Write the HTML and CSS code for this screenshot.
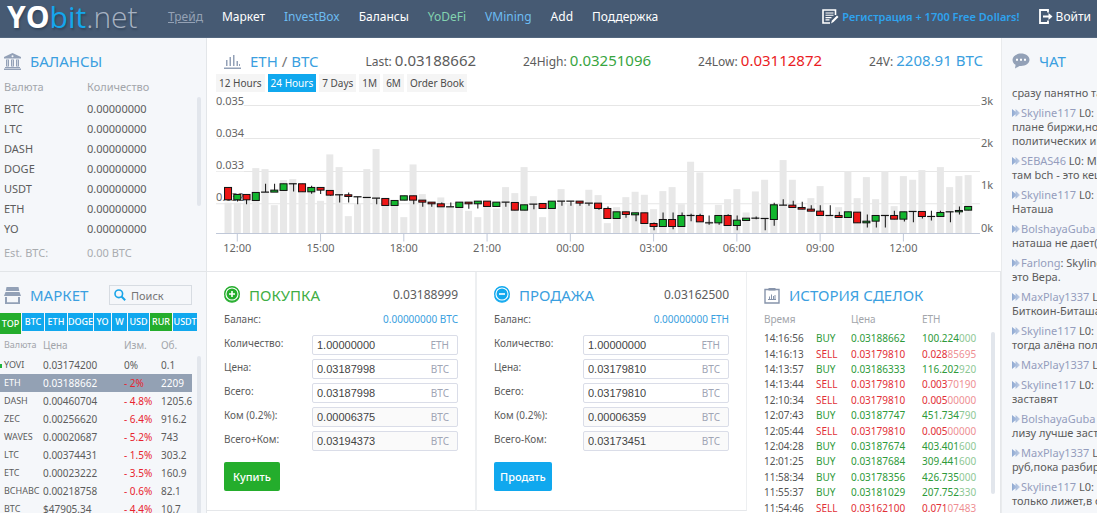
FILE: index.html
```
<!DOCTYPE html>
<html lang="ru">
<head>
<meta charset="utf-8">
<title>YObit.net</title>
<link rel="stylesheet" href="styles.css">
</head>
<body>
<header class="top">
  <a class="logo" href="#"><b>YO</b><span class="logo-bit">bit</span><span class="logo-net">.net</span></a>
  <nav class="nav">
    <a class="current" href="#">Трейд</a>
    <a href="#">Маркет</a>
    <a class="sky" href="#">InvestBox</a>
    <a href="#">Балансы</a>
    <a class="mint" href="#">YoDeFi</a>
    <a class="sky" href="#">VMining</a>
    <a href="#">Add</a>
    <a href="#">Поддержка</a>
  </nav>
  <div class="account">
    <a class="register" href="#"><svg width="17" height="16" viewBox="0 0 17 16" fill="none" stroke="#fff"><path d="M13.5 6V1H1v13h7" stroke-width="1.6"/><path d="M3.5 4h8M3.5 6.3h8M3.5 8.6h6M3.5 10.9h4" stroke-width="1.1"/><path d="M9 14.5l1-3 5-5 1.5 1.5-5 5z" fill="#fff" stroke="none"/></svg><span>Регистрация + 1700 Free Dollars!</span></a>
    <a class="login" href="#"><svg width="14" height="15" viewBox="0 0 14 15" fill="none" stroke="#fff" stroke-width="1.8"><path d="M9 3.500V1H1v13h8v-2.500M4 7.500h7"/><path d="M9.500 4l4 3.500-4 3.500z" fill="#fff" stroke="none"/></svg><span>Войти</span></a>
  </div>
</header>
<div class="page">
  <aside class="side">
    <section class="balances">
      <h2 class="title"><svg width="17" height="17" viewBox="0 0 17 17" fill="#93a1b7"><path d="M8.500 0L17 4v1.500H0V4zM2 6.500h3v7H2zM7 6.500h3v7H7zM12 6.500h3v7h-3zM1 14h15v1H1zM0 15.500h17V17H0z"/><circle cx="8.500" cy="3.200" r="1" fill="#f5f7fa"/><path d="M3.500 7v6M8.500 7v6M13.500 7v6" stroke="#f5f7fa" stroke-width=".6"/></svg>БАЛАНСЫ</h2>
      <div class="scroller">
      <table class="balance-table">
        <thead><tr><th>Валюта</th><th>Количество</th></tr></thead>
        <tbody>
          <tr><td>BTC</td><td>0.00000000</td></tr>
          <tr><td>LTC</td><td>0.00000000</td></tr>
          <tr><td>DASH</td><td>0.00000000</td></tr>
          <tr><td>DOGE</td><td>0.00000000</td></tr>
          <tr><td>USDT</td><td>0.00000000</td></tr>
          <tr><td>ETH</td><td>0.00000000</td></tr>
          <tr><td>YO</td><td>0.00000000</td></tr>
        </tbody>
        <tfoot><tr><td>Est. BTC:</td><td>0.00 BTC</td></tr></tfoot>
      </table>
      <div class="thumb thumb-balance"></div>
      </div>
    </section>
    <section class="market">
      <div class="market-head">
        <h2 class="title"><svg width="17" height="17" viewBox="0 0 17 17" fill="#93a1b7"><path d="M2.500 0h12l.8 4H1.700zM1.500 5h14L17 9H0zM1 10h2v5.200h11V10h2v7H1z"/></svg>МАРКЕТ</h2>
        <label class="search"><svg width="12" height="12" viewBox="0 0 12 12" fill="none" stroke="#1aa5e8"><circle cx="4.800" cy="4.800" r="3.800" stroke-width="1.600"/><path d="M7.500 7.500l3.700 3.700" stroke-width="2"/></svg><input type="text" placeholder="Поиск" aria-label="Поиск"></label>
      </div>
      <div class="tabs">
        <button class="green tall">TOP</button><button>BTC</button><button>ETH</button><button>DOGE</button><button>YO</button><button>W</button><button>USD</button><button class="green">RUR</button><button>USDT</button>
      </div>
      <div class="scroller">
      <table class="market-table">
        <thead><tr><th>Валюта</th><th>Цена</th><th>Изм.</th><th>Об.</th></tr></thead>
        <tbody>
          <tr class="fresh"><td>YOVI</td><td>0.03174200</td><td class="flat">0%</td><td>0.1</td></tr>
          <tr class="selected"><td>ETH</td><td>0.03188662</td><td>- 2%</td><td>2209</td></tr>
          <tr><td>DASH</td><td>0.00460704</td><td>- 4.8%</td><td>1205.6</td></tr>
          <tr><td>ZEC</td><td>0.00256620</td><td>- 6.4%</td><td>916.2</td></tr>
          <tr><td>WAVES</td><td>0.00020687</td><td>- 5.2%</td><td>743</td></tr>
          <tr><td>LTC</td><td>0.00374431</td><td>- 1.5%</td><td>303.2</td></tr>
          <tr><td>ETC</td><td>0.00023222</td><td>- 3.5%</td><td>160.9</td></tr>
          <tr><td>BCHABC</td><td>0.00218758</td><td>- 0.6%</td><td>82.1</td></tr>
          <tr><td>BTC</td><td>$47905.34</td><td>- 4.4%</td><td>10.7</td></tr>
        </tbody>
      </table>
      <div class="thumb thumb-market"></div>
      </div>
    </section>
  </aside>
  <main class="main">
    <section class="chart">
      <div class="stats">
        <h1 class="title"><svg width="17" height="15" viewBox="0 0 17 15" fill="#93a1b7"><path d="M2 6h1.500v6H2zM5.500 3H7v9H5.500zM9 1h1.500v11H9zM12.500 7H14v5h-1.500zM15 10h1v2h-1zM0 13.500h17V15H0z"/></svg><span>ETH <i>/</i> BTC</span></h1>
        <span>Last: <b>0.03188662</b></span>
        <span>24High: <b class="up">0.03251096</b></span>
        <span>24Low: <b class="down">0.03112872</b></span>
        <span>24V: <b class="vol">2208.91 BTC</b></span>
      </div>
      <div class="ranges">
        <button>12 Hours</button><button class="on">24 Hours</button><button>7 Days</button><button>1M</button><button>6M</button><button>Order Book</button>
      </div>
      <svg class="plot" id="plot" viewBox="0 0 784 166" role="img" aria-label="ETH / BTC"></svg>
    </section>
    <section class="deals">
      <form class="trade buy">
        <div class="trade-head"><h2 class="title"><svg width="16" height="18" viewBox="0 0 16 18" fill="none"><path d="M.8 10.500a7.300 6.600 0 0 0 14.400 0" stroke="#24ad2c" stroke-width="1.300"/><circle cx="8" cy="8" r="7.300" stroke="#24ad2c" stroke-width="1.400" fill="#fff"/><circle cx="8" cy="8" r="5.500" fill="#24ad2c"/><path d="M8 5v6M5 8h6" stroke="#fff" stroke-width="1.600"/></svg>ПОКУПКА</h2><span>0.03188999</span></div>
        <div class="funds"><span>Баланс:</span><a href="#">0.00000000 BTC</a></div>
        <div class="field"><label for="b1">Количество:</label><span class="box"><input id="b1" value="1.00000000"><em>ETH</em></span></div>
        <div class="field"><label for="b2">Цена:</label><span class="box"><input id="b2" value="0.03187998"><em>BTC</em></span></div>
        <div class="field"><label for="b3">Всего:</label><span class="box"><input id="b3" value="0.03187998"><em>BTC</em></span></div>
        <div class="field"><label for="b4">Ком (0.2%):</label><span class="box locked"><input id="b4" value="0.00006375" readonly><em>BTC</em></span></div>
        <div class="field"><label for="b5">Всего+Ком:</label><span class="box locked"><input id="b5" value="0.03194373" readonly><em>BTC</em></span></div>
        <button class="submit" type="button">Купить</button>
      </form>
      <form class="trade sell">
        <div class="trade-head"><h2 class="title"><svg width="16" height="18" viewBox="0 0 16 18" fill="none"><path d="M.8 10.500a7.300 6.600 0 0 0 14.400 0" stroke="#10a8ee" stroke-width="1.300"/><circle cx="8" cy="8" r="7.300" stroke="#10a8ee" stroke-width="1.400" fill="#fff"/><circle cx="8" cy="8" r="5.500" fill="#10a8ee"/><path d="M5 8h6" stroke="#fff" stroke-width="1.600"/></svg>ПРОДАЖА</h2><span>0.03162500</span></div>
        <div class="funds"><span>Баланс:</span><a href="#">0.00000000 ETH</a></div>
        <div class="field"><label for="s1">Количество:</label><span class="box"><input id="s1" value="1.00000000"><em>ETH</em></span></div>
        <div class="field"><label for="s2">Цена:</label><span class="box"><input id="s2" value="0.03179810"><em>BTC</em></span></div>
        <div class="field"><label for="s3">Всего:</label><span class="box"><input id="s3" value="0.03179810"><em>BTC</em></span></div>
        <div class="field"><label for="s4">Ком (0.2%):</label><span class="box locked"><input id="s4" value="0.00006359" readonly><em>BTC</em></span></div>
        <div class="field"><label for="s5">Всего-Ком:</label><span class="box locked"><input id="s5" value="0.03173451" readonly><em>BTC</em></span></div>
        <button class="submit" type="button">Продать</button>
      </form>
      <section class="history">
        <h2 class="title"><svg width="16" height="17" viewBox="0 0 16 17" fill="none" stroke="#8794ab"><path d="M1 2.500h14v13.500H1z" stroke-width="1.400"/><path d="M4.500 1h7v2.500h-7z" fill="#8794ab" stroke="none"/><path d="M4 12.500h8M5.500 12V9.500M7.500 12V7.500M9.500 12V9M11 12V8"/></svg>ИСТОРИЯ СДЕЛОК</h2>
        <div class="scroller">
        <table class="history-table">
          <thead><tr><th>Время</th><th></th><th>Цена</th><th>ETH</th></tr></thead>
          <tbody>
            <tr class="b"><td>14:16:56</td><td>BUY</td><td>0.03188662</td><td>100.224<s>000</s></td></tr>
            <tr><td>14:16:13</td><td>SELL</td><td>0.03179810</td><td>0.028<s>85695</s></td></tr>
            <tr class="b"><td>14:13:57</td><td>BUY</td><td>0.03186333</td><td>116.202<s>920</s></td></tr>
            <tr><td>14:13:44</td><td>SELL</td><td>0.03179810</td><td>0.003<s>70190</s></td></tr>
            <tr><td>12:10:34</td><td>SELL</td><td>0.03179810</td><td>0.005<s>00000</s></td></tr>
            <tr class="b"><td>12:07:43</td><td>BUY</td><td>0.03187747</td><td>451.734<s>790</s></td></tr>
            <tr><td>12:05:44</td><td>SELL</td><td>0.03179810</td><td>0.005<s>00000</s></td></tr>
            <tr class="b"><td>12:04:28</td><td>BUY</td><td>0.03187674</td><td>403.401<s>600</s></td></tr>
            <tr class="b"><td>12:01:25</td><td>BUY</td><td>0.03187684</td><td>309.441<s>600</s></td></tr>
            <tr class="b"><td>11:58:34</td><td>BUY</td><td>0.03178356</td><td>426.735<s>000</s></td></tr>
            <tr class="b"><td>11:55:37</td><td>BUY</td><td>0.03181029</td><td>207.752<s>330</s></td></tr>
            <tr><td>11:54:46</td><td>SELL</td><td>0.03162100</td><td>0.071<s>07483</s></td></tr>
          </tbody>
        </table>
        <div class="thumb thumb-history"></div>
        </div>
      </section>
    </section>
  </main>
  <aside class="chat">
    <h2 class="title"><svg width="18" height="16" viewBox="0 0 18 16" fill="#93a1b7"><path d="M9 .5c4.700 0 8.500 2.700 8.500 6.200s-3.800 6.200-8.500 6.200h-1.500L3 15.500l.6-3.700C1.700 10.700.5 8.800.5 6.700.5 3.200 4.300.5 9 .5z"/><path d="M4 5.800h2v2H4zM8 5.800h2v2H8zM12 5.800h2v2h-2z" fill="#fff"/></svg>ЧАТ</h2>
    <div class="messages">
      <p>сразу панятно та</p>
      <p><a href="#">Skyline117</a> L0:<br>плане биржи,но<br>политических ин</p>
      <p><a href="#">SEBAS46</a> L0: М<br>там bch - это кеш</p>
      <p><a href="#">Skyline117</a> L0:<br>Наташа</p>
      <p><a href="#">BolshayaGuba</a> <u>L0</u><br>наташа не дает(</p>
      <p><a href="#">Farlong</a>: Skyline<br>это Вера.</p>
      <p><a href="#">MaxPlay1337</a> L0<br>Биткоин-Биташа</p>
      <p><a href="#">Skyline117</a> L0:<br>тогда алёна полк</p>
      <p><a href="#">MaxPlay1337</a> L0</p>
      <p><a href="#">Skyline117</a> L0:<br>заставят</p>
      <p><a href="#">BolshayaGuba</a> <u>L0</u><br>лизу лучше заста</p>
      <p><a href="#">MaxPlay1337</a> L0<br>руб,пока разбира</p>
      <p><a href="#">Skyline117</a> L0:<br>только лижет,в ос</p>
    </div>
  </aside>
</div>
<script src="chart.js"></script>
</body>
</html>
```
FILE: styles.css
```
* { box-sizing: border-box; }
body {
  margin: 0;
  height: 100vh;
  overflow: hidden;
  background: #fff;
  color: #5c5c5c;
  font: 11px/14px "Noto Sans", "Open Sans", sans-serif;
}
a { color: inherit; text-decoration: none; }
h1, h2, p { margin: 0; font-weight: 400; }
button, input { font-family: inherit; }
button { border: 0; padding: 0; cursor: pointer; }
table { border-collapse: collapse; table-layout: fixed; }
th, td { padding: 0; text-align: left; font-weight: 400; white-space: nowrap; }
th { color: #a3a6ab; }
svg { flex: none; }

.top {
  display: flex;
  align-items: center;
  height: 38px;
  padding: 0 6px 4px 7px;
  background: #465a73;
  border-bottom: 1px solid #53677f;
  color: #fff;
  font-size: 12px;
  white-space: nowrap;
}
.logo {
  width: 161px;
  font: 300 30px/34px "Open Sans", "Noto Sans", sans-serif;
  text-shadow: 1px 2px 2px #34465c;
}
.logo b { font-weight: 700; }
.logo-bit { color: #14a6ec; font-weight: 400; }
.logo-net { color: #a7b2c2; }
.nav { display: flex; gap: 19px; }
.current { color: #95a2b5; text-decoration: underline; }
.sky { color: #6cbcf2; }
.mint { color: #83d3b0; }
.account { display: flex; gap: 19px; margin-left: auto; }
.register, .login { display: flex; align-items: center; gap: 3px; }
.register { color: #2ea3ee; font-size: 11px; font-weight: 600; }

.page { display: grid; grid-template-columns: 207px minmax(0, 1fr) 96px; }
.side { background: #f5f7fa; border-right: 1px solid #e3e6e9; }
.title {
  display: flex;
  align-items: center;
  gap: 9px;
  color: #3b9fe0;
  font-size: 15px;
  line-height: 20px;
}
.scroller { position: relative; }
.thumb { position: absolute; width: 4px; background: #e2e6ec; border-radius: 2px; }

.balances { height: 234px; padding: 13px 0 0 4px; border-bottom: 1px solid #e2e5e8; }
.balance-table { width: 196px; margin-top: 6px; }
.balance-table th { height: 22px; width: 83px; padding-bottom: 3px; }
.balance-table th + th { width: auto; }
.balance-table td { height: 20px; }
.balance-table tfoot td { height: 28px; color: #a9acb0; }
.thumb-balance { left: 193px; top: 20px; height: 109px; }

.market-head { display: flex; align-items: center; justify-content: space-between; padding: 13px 14px 0 4px; }
.search {
  display: flex;
  align-items: center;
  gap: 5px;
  width: 83px;
  height: 20px;
  padding-left: 4px;
  border: 1px solid #d7dce2;
}
.search input { width: 56px; padding: 0; border: 0; outline: 0; background: none; font-size: 11px; }
.tabs {
  display: grid;
  grid-template-columns: 21px 22px 22px 25px 17px 15px 21px 22px 24px;
  gap: 1px;
  height: 21px;
  margin-top: 8px;
  align-items: start;
}
.tabs button {
  display: flex;
  justify-content: center;
  height: 18px;
  background: #10a8ee;
  color: #fff;
  font-size: 9px;
  font-weight: 500;
  line-height: 18px;
}
.tabs .green { background: #24ad2c; }
.tabs .tall { height: 21px; line-height: 21px; }
.market-table { width: 192px; font-size: 10px; }
.market-table th { height: 22px; }
.market-table th:nth-child(1) { width: 43px; }
.market-table th:nth-child(3) { width: 37px; }
.market-table th:nth-child(4) { width: 31px; }
.market-table td { height: 18px; }
.market-table th:first-child, .market-table td:first-child { padding-left: 4px; font-size: 9px; }
.market-table td:nth-child(3) { color: #e8232f; }
.market-table td.flat { color: #5c5c5c; }
.fresh { background: linear-gradient(#1fb43b, #1fb43b) 0 8px / 2px 4px no-repeat; }
.selected { background: #93a1b4; color: #fff; font-weight: 600; }
.selected td:nth-child(3) { font-weight: 400; }
.thumb-market { left: 197px; top: 22px; height: 158px; }

.chart { height: 234px; padding: 13px 0 0 9px; border-bottom: 1px solid #e5e7ea; }
.stats {
  display: flex;
  justify-content: space-between;
  align-items: center;
  height: 20px;
  padding: 0 18px 0 8px;
  font-size: 12px;
  white-space: nowrap;
}
.stats i { color: #777; font-style: normal; }
.stats b { font-size: 15px; font-weight: 400; }
.up { color: #38a53f; }
.down { color: #ea1c24; }
.vol { color: #3b9fe0; }
.ranges { display: flex; gap: 3px; margin-top: 3px; }
.ranges button { height: 18px; padding: 0 3px; background: #f5f5f5; color: #4c4c4c; font-size: 10px; }
.ranges .on { background: #10a8ee; color: #fff; }
.plot { display: block; width: 100%; height: auto; font-size: 11px; }
.plot text { fill: #666; }

.deals { display: grid; grid-template-columns: 270px 270px minmax(0, 1fr); }
.trade { height: 239px; padding: 13px 17px 0 17px; border-right: 2px solid #edeff1; border-bottom: 1px solid #e5e7ea; font-size: 10px; }
.sell { border-right-width: 1px; }
.trade-head, .funds { display: flex; justify-content: space-between; align-items: center; }
.trade-head { font-size: 12px; }
.buy .title { color: #3fae45; }
.funds { height: 14px; margin: 7px 0 9px; }
.funds a { color: #3b9fe0; }
.field { display: flex; justify-content: space-between; height: 20px; margin-bottom: 4px; line-height: 16px; }
.box { display: flex; align-items: center; width: 146px; height: 20px; padding: 0 5px 0 4px; border: 1px solid #dadde8; border-radius: 2px; }
.box input { flex: 1; min-width: 0; padding: 0; border: 0; outline: 0; background: none; color: #444; font: 11px "Liberation Sans", sans-serif; }
.box em { padding-right: 3px; color: #a0a5b5; font-style: normal; }
.locked { background: #fafafa; }
.submit { height: 29px; margin-top: 7px; padding: 0 9px; border-radius: 2px; background: #24ad2c; color: #fff; font-size: 11px; font-weight: 500; }
.sell .submit { padding: 0 6px; background: #10a8ee; }

.history { padding: 13px 0 0 17px; border-right: 1px solid #e5e7ea; }
.history-table { width: 220px; height: 208px; margin-top: 3px; font-size: 10px; line-height: 13px; }
.history-table th { height: 23px; }
.history-table th:nth-child(1) { width: 52px; }
.history-table th:nth-child(2) { width: 35px; }
.history-table th:nth-child(3) { width: 71px; }
.history-table td { color: #e23038; }
.history-table .b td { color: #2e9a3a; }
.history-table td:first-child, .history-table .b td:first-child { color: #555; }
.history-table s { opacity: .55; text-decoration: none; }
.thumb-history { left: 227px; top: 24px; height: 162px; }

.chat { padding: 13px 0 0 10px; background: #f5f7fa; border-left: 1px solid #e9ebed; overflow: hidden; }
.messages { margin-top: 15px; white-space: nowrap; }
.messages p { margin-bottom: 6px; }
.messages a { color: #949dbd; }
.messages a::before {
  content: "";
  display: inline-block;
  width: 8px;
  height: 8px;
  margin-right: 1px;
  background: linear-gradient(90deg, #8fa9d2, #c3d0e6);
  clip-path: polygon(0 0, 45% 35%, 45% 0, 100% 50%, 45% 100%, 45% 65%, 0 100%);
}
.messages u { color: #f0a24a; text-decoration: none; }
```
FILE: chart.js
```
// One entry per 20 minutes, depths in thirds of a unit below the top of the plot:
// volume top, high, body top, body bottom, low, direction (u / d / - for doji)
const candles = `330 295 295 332 332 d|310 316 316 332 337 u|322 316 316 332 345 d|237 310 310 334 334 u|240 284 309 309 309 -|348 284 303 309 309 u|273 284 284 304 304 u|270 284 284 284 307 -|310 284 284 308 308 d|308 290 295 308 314 u|335 295 295 303 315 d|196 304 304 318 320 d|234 317 317 317 340 -|381 310 317 322 340 d|345 323 323 323 345 -|240 325 325 325 325 -|180 327 327 327 345 -|340 328 328 349 349 d|345 334 334 349 349 u|384 320 320 333 333 u|226 320 320 333 345 d|315 333 333 339 353 d|340 339 339 344 353 d|325 340 344 353 353 d|352 340 353 353 353 -|350 339 339 355 355 u|365 339 339 344 359 d|384 336 336 344 358 u|353 336 336 352 352 d|358 339 339 352 352 u|294 339 339 339 353 -|312 340 340 363 363 d|234 347 347 363 363 u|321 345 345 345 360 -|384 343 343 358 358 d|350 336 336 358 358 u|300 336 336 336 350 -|345 336 336 336 350 -|345 336 336 342 350 d|302 342 342 342 350 -|318 342 342 358 362 d|402 352 358 388 388 d|354 368 368 388 388 u|324 368 368 376 386 d|308 371 371 377 396 u|317 371 371 403 403 d|360 400 403 412 423 d|306 370 391 412 412 u|294 370 391 412 420 d|345 370 379 412 412 u|218 374 379 379 396 -|250 374 379 398 398 d|395 379 401 401 407 -|347 379 379 401 407 u|330 375 379 409 409 d|300 379 393 409 423 u|370 387 387 394 394 u|307 382 387 387 390 -|272 388 388 388 423 -|345 341 347 391 410 u|213 330 348 348 348 -|272 335 348 355 355 d|355 338 355 360 360 d|327 348 360 366 366 d|291 348 366 379 379 d|379 348 379 379 379 -|354 368 379 385 385 d|246 368 368 385 385 u|327 369 369 401 401 d|264 376 396 401 415 u|330 379 379 396 415 u|246 379 379 379 415 -|351 365 379 390 390 d|261 368 368 390 397 u|272 367 367 367 399 -|243 367 367 382 388 d|385 365 382 382 394 -|234 365 370 382 382 u|294 368 368 368 399 -|261 352 364 368 376 u|258 352 352 363 363 u`
  .split("|").map(row => row.split(" "));
const inset = 3;
const depth = v => v / 3 - inset;
const x = i => 12 + i * 9.24;
const base = depth(433);
let svg = "";
[49, 148, 247, 341].forEach(g => {
  svg += `<path d="M0 ${Math.round(depth(g)) + 0.5}H763" stroke="#e6e6e6"/>`;
});
candles.forEach((c, i) => {
  svg += `<rect x="${x(i) - 3.5}" y="${depth(c[0])}" width="7" height="${base - depth(c[0])}" fill="#e8e8e8"/>`;
});
svg += `<path d="M0 ${base}H763" stroke="#c0c8d8"/>`;
["12:00", "15:00", "18:00", "21:00", "00:00", "03:00", "06:00", "09:00", "12:00"].forEach((t, k) => {
  const cx = x(1 + k * 9);
  svg += `<path d="M${cx} ${base}v8" stroke="#c0c8d8"/><text x="${cx}" y="${base + 18}" text-anchor="middle">${t}</text>`;
});
[["0.035", 48], ["0.034", 143], ["0.033", 241], ["0.032", 335]].forEach(([t, y]) => {
  svg += `<rect x="0" y="${depth(y) - 9}" width="28" height="11" fill="#fff" opacity=".8"/><text x="0" y="${depth(y)}">${t}</text>`;
});
[["3k", 48], ["2k", 175], ["1k", 301], ["0k", 428]].forEach(([t, y]) => {
  svg += `<text x="764" y="${depth(y)}">${t}</text>`;
});
candles.forEach((c, i) => {
  const [, hi, a, b, lo] = c.map(depth);
  const dir = c[5];
  svg += `<path d="M${Math.round(x(i)) + 0.5} ${hi}V${lo}" stroke="#111"/>`;
  if (dir === "-") {
    svg += `<path d="M${x(i) - 4} ${a}h8" stroke="#111" stroke-width="1.2"/>`;
  } else {
    svg += `<rect x="${x(i) - 3.5}" y="${a}" width="7" height="${b - a}" fill="${dir === "u" ? "#12b62e" : "#ee1616"}" stroke="#111"/>`;
  }
});
document.getElementById("plot").innerHTML = svg;
```
